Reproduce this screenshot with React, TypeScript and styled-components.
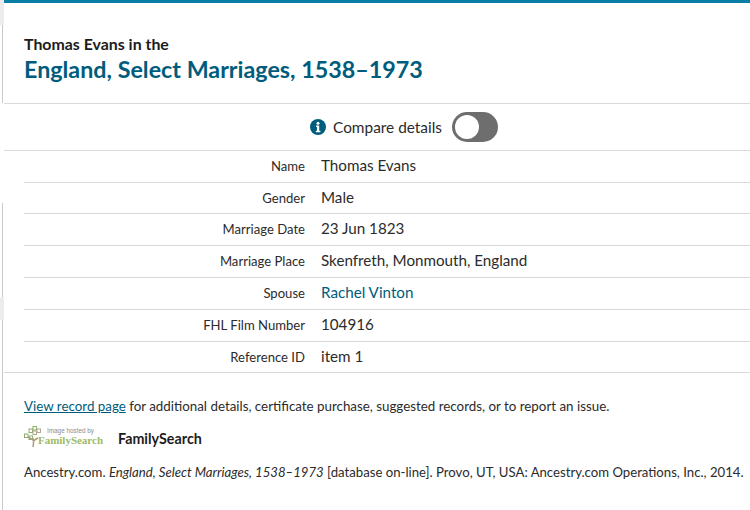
import React from 'react';
import styled, { createGlobalStyle } from 'styled-components';

const GlobalStyle = createGlobalStyle`
  html, body {
    margin: 0;
    padding: 0;
    background: #fff;
    font-family: "Lato", "Open Sans", sans-serif;
    color: #2b2b2b;
  }
`;

const Page = styled.div`
  width: 750px;
  height: 510px;
  overflow: hidden;
  display: flex;
  background: #fff;
`;

const Edge = styled.div`
  width: 4px;
  flex: none;
  display: flex;
  flex-direction: column;
`;

const EdgePiece = styled.div<{ $h: number; $line?: boolean; $fill?: boolean }>`
  height: ${(p) => p.$h}px;
  flex: none;
  box-sizing: border-box;
  background: ${(p) => (p.$fill ? '#ececec' : '#fff')};
  border-right: ${(p) => (p.$line ? '1px solid #c9c9c9' : 'none')};
  margin-right: ${(p) => (p.$line ? '1px' : '0')};
`;

const Panel = styled.div`
  flex: 1;
  min-width: 0;
  border-top: 3px solid #0a7ea4;
`;

const Header = styled.header`
  padding: 31px 20px 0;
  height: 101px;
  box-sizing: border-box;
  border-bottom: 1px solid #d9d9d9;
`;

const Lead = styled.div`
  font-size: 15.9px;
  line-height: 20px;
  font-weight: 700;
  color: #1c1c1c;
`;

const Title = styled.h1`
  margin: 0;
  font-size: 23.3px;
  line-height: 30px;
  font-weight: 700;
  color: #005c7c;
`;

const CompareBar = styled.div`
  height: 47px;
  box-sizing: border-box;
  display: flex;
  align-items: center;
  justify-content: center;
  gap: 7px;
  padding-left: 54px;
  border-bottom: 1px solid #d9d9d9;
  font-size: 15.4px;
`;

const Toggle = styled.span`
  width: 46px;
  height: 30px;
  margin-left: 3px;
  border-radius: 15px;
  background: #6e6e6e;
  display: flex;
  align-items: center;
  padding-left: 3px;
  box-sizing: border-box;
`;

const Knob = styled.span`
  width: 24px;
  height: 24px;
  border-radius: 50%;
  background: #fff;
`;

const Rows = styled.div`
  padding-left: 20px;
  border-bottom: 1px solid #d9d9d9;
`;

const Row = styled.div`
  display: grid;
  grid-template-columns: 281px 1fr;
  column-gap: 16px;
  height: 32px;
  padding-bottom: 3px;
  align-items: center;
  box-sizing: border-box;
  border-bottom: 1px solid #d9d9d9;

  &:nth-child(2) {
    height: 31px;
  }

  &:last-child {
    height: 30px;
    border-bottom: none;
  }
`;

const Label = styled.div`
  text-align: right;
  font-size: 13.1px;
  padding-top: 2px;
`;

const Value = styled.div`
  font-size: 15.2px;
`;

const RecordLink = styled.a<{ $under?: boolean }>`
  color: #005c7c;
  text-decoration: ${(p) => (p.$under ? 'underline' : 'none')};
`;

const Footer = styled.div`
  padding: 24px 0 0 20px;
  font-size: 13.35px;
`;

const Line = styled.div`
  line-height: 18px;
  white-space: nowrap;
`;

const Citation = styled(Line)`
  font-size: 13.16px;
`;

const HostRow = styled.div`
  display: flex;
  align-items: center;
  gap: 14px;
  margin: 11px 0 13px;
  height: 24px;
`;

const HostName = styled.span`
  font-weight: 700;
  font-size: 14.3px;
  color: #1c1c1c;
`;

const LogoSvg = styled.svg`
  flex: none;
  overflow: visible;
`;

const InfoIcon = () => (
  <svg width="16" height="16" viewBox="0 0 16 16" aria-hidden="true">
    <circle cx="8" cy="8" r="8" fill="#005c7c" />
    <circle cx="8" cy="4.2" r="1.5" fill="#fff" />
    <path d="M6 6.6h3.2v5.2H10.4v1.5H5.8v-1.5h1.2V8.1H6z" fill="#fff" />
  </svg>
);

const FamilySearchLogo = () => (
  <LogoSvg width="80" height="24" viewBox="0 0 80 24" aria-hidden="true">
    <g fill="none" stroke="#8fae6a" strokeWidth="1">
      <rect x="5" y="3" width="3.5" height="3.5" />
      <rect x="9" y="0.5" width="3.5" height="3.5" />
      <rect x="9" y="5" width="3.5" height="3.5" stroke="#b0a890" />
      <rect x="13" y="3" width="3.5" height="3.5" stroke="#b0a890" />
      <rect x="0.5" y="8" width="3.5" height="3.5" />
      <rect x="5" y="10" width="3.5" height="3.5" />
    </g>
    <path d="M9 21c1-4 1-6 0-9M9 15l5-3M9 14l-5-3" fill="none" stroke="#a89f80" strokeWidth="1.5" />
    <text x="23" y="7" fontSize="6.5" fill="#8c8c8c" textLength="47" lengthAdjust="spacingAndGlyphs" fontFamily="Liberation Sans, sans-serif">Image hosted by</text>
    <text x="14" y="18" fontSize="10.8" fontWeight="700" fill="#9dbb63" textLength="65" lengthAdjust="spacingAndGlyphs" fontFamily="Liberation Serif, serif">FamilySearch</text>
  </LogoSvg>
);

const fields = [
  { label: 'Name', value: 'Thomas Evans' },
  { label: 'Gender', value: 'Male' },
  { label: 'Marriage Date', value: '23 Jun 1823' },
  { label: 'Marriage Place', value: 'Skenfreth, Monmouth, England' },
  { label: 'Spouse', value: 'Rachel Vinton', link: true },
  { label: 'FHL Film Number', value: '104916' },
  { label: 'Reference ID', value: 'item 1' },
];

export default function App() {
  return (
    <Page>
      <GlobalStyle />
      <Edge>
        <EdgePiece $h={25} $fill />
        <EdgePiece $h={78} $line />
        <EdgePiece $h={100} />
        <EdgePiece $h={94} $line />
        <EdgePiece $h={23} $fill />
        <EdgePiece $h={190} $line />
      </Edge>
      <Panel>
        <Header>
          <Lead>Thomas Evans in the</Lead>
          <Title>England, Select Marriages, 1538–1973</Title>
        </Header>
        <CompareBar>
          <InfoIcon />
          <span>Compare details</span>
          <Toggle>
            <Knob />
          </Toggle>
        </CompareBar>
        <Rows>
          {fields.map((f) => (
            <Row key={f.label}>
              <Label>{f.label}</Label>
              <Value>{f.link ? <RecordLink href="#">{f.value}</RecordLink> : f.value}</Value>
            </Row>
          ))}
        </Rows>
        <Footer>
          <Line>
            <RecordLink href="#" $under>View record page</RecordLink> for additional details, certificate purchase, suggested records, or to report an issue.
          </Line>
          <HostRow>
            <FamilySearchLogo />
            <HostName>FamilySearch</HostName>
          </HostRow>
          <Citation>
            Ancestry.com. <em>England, Select Marriages, 1538–1973</em> [database on-line]. Provo, UT, USA: Ancestry.com Operations, Inc., 2014.
          </Citation>
        </Footer>
      </Panel>
    </Page>
  );
}
